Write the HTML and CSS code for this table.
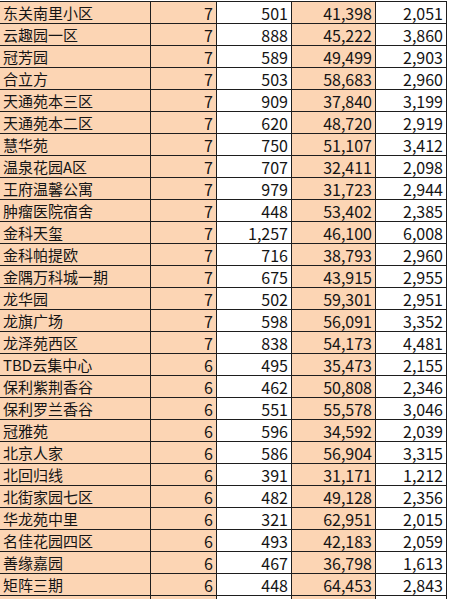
FILE: index.html
```html
<!DOCTYPE html>
<html lang="zh-CN">
<head>
<meta charset="utf-8">
<title>小区数据</title>
<link rel="stylesheet" href="styles.css">
</head>
<body>
<div class="sheet">
<div class="c name">东关南里小区</div><div class="c num o">7</div><div class="c num">501</div><div class="c num o">41,398</div><div class="c num">2,051</div>
<div class="c name">云趣园一区</div><div class="c num o">7</div><div class="c num">888</div><div class="c num o">45,222</div><div class="c num">3,860</div>
<div class="c name">冠芳园</div><div class="c num o">7</div><div class="c num">589</div><div class="c num o">49,499</div><div class="c num">2,903</div>
<div class="c name">合立方</div><div class="c num o">7</div><div class="c num">503</div><div class="c num o">58,683</div><div class="c num">2,960</div>
<div class="c name">天通苑本三区</div><div class="c num o">7</div><div class="c num">909</div><div class="c num o">37,840</div><div class="c num">3,199</div>
<div class="c name">天通苑本二区</div><div class="c num o">7</div><div class="c num">620</div><div class="c num o">48,720</div><div class="c num">2,919</div>
<div class="c name">慧华苑</div><div class="c num o">7</div><div class="c num">750</div><div class="c num o">51,107</div><div class="c num">3,412</div>
<div class="c name">温泉花园A区</div><div class="c num o">7</div><div class="c num">707</div><div class="c num o">32,411</div><div class="c num">2,098</div>
<div class="c name">王府温馨公寓</div><div class="c num o">7</div><div class="c num">979</div><div class="c num o">31,723</div><div class="c num">2,944</div>
<div class="c name">肿瘤医院宿舍</div><div class="c num o">7</div><div class="c num">448</div><div class="c num o">53,402</div><div class="c num">2,385</div>
<div class="c name">金科天玺</div><div class="c num o">7</div><div class="c num">1,257</div><div class="c num o">46,100</div><div class="c num">6,008</div>
<div class="c name">金科帕提欧</div><div class="c num o">7</div><div class="c num">716</div><div class="c num o">38,793</div><div class="c num">2,960</div>
<div class="c name">金隅万科城一期</div><div class="c num o">7</div><div class="c num">675</div><div class="c num o">43,915</div><div class="c num">2,955</div>
<div class="c name">龙华园</div><div class="c num o">7</div><div class="c num">502</div><div class="c num o">59,301</div><div class="c num">2,951</div>
<div class="c name">龙旗广场</div><div class="c num o">7</div><div class="c num">598</div><div class="c num o">56,091</div><div class="c num">3,352</div>
<div class="c name">龙泽苑西区</div><div class="c num o">7</div><div class="c num">838</div><div class="c num o">54,173</div><div class="c num">4,481</div>
<div class="c name">TBD云集中心</div><div class="c num o">6</div><div class="c num">495</div><div class="c num o">35,473</div><div class="c num">2,155</div>
<div class="c name">保利紫荆香谷</div><div class="c num o">6</div><div class="c num">462</div><div class="c num o">50,808</div><div class="c num">2,346</div>
<div class="c name">保利罗兰香谷</div><div class="c num o">6</div><div class="c num">551</div><div class="c num o">55,578</div><div class="c num">3,046</div>
<div class="c name">冠雅苑</div><div class="c num o">6</div><div class="c num">596</div><div class="c num o">34,592</div><div class="c num">2,039</div>
<div class="c name">北京人家</div><div class="c num o">6</div><div class="c num">586</div><div class="c num o">56,904</div><div class="c num">3,315</div>
<div class="c name">北回归线</div><div class="c num o">6</div><div class="c num">391</div><div class="c num o">31,171</div><div class="c num">1,212</div>
<div class="c name">北街家园七区</div><div class="c num o">6</div><div class="c num">482</div><div class="c num o">49,128</div><div class="c num">2,356</div>
<div class="c name">华龙苑中里</div><div class="c num o">6</div><div class="c num">321</div><div class="c num o">62,951</div><div class="c num">2,015</div>
<div class="c name">名佳花园四区</div><div class="c num o">6</div><div class="c num">493</div><div class="c num o">42,183</div><div class="c num">2,059</div>
<div class="c name">善缘嘉园</div><div class="c num o">6</div><div class="c num">467</div><div class="c num o">36,798</div><div class="c num">1,613</div>
<div class="c name">矩阵三期</div><div class="c num o">6</div><div class="c num">448</div><div class="c num o">64,453</div><div class="c num">2,843</div>
<div class="c name"></div><div class="c num o"></div><div class="c num"></div><div class="c num o"></div><div class="c num"></div>
</div>
</body>
</html>
```

FILE: styles.css
```css
html, body {
  margin: 0;
  padding: 0;
  background: #ffffff;
}

body {
  font-family: "Noto Sans CJK SC", "Noto Sans", sans-serif;
  font-size: 15px;
  color: #141414;
  overflow: hidden;
}

.sheet {
  display: grid;
  grid-template-columns: 150px 65px 74px 83px 70px;
  grid-auto-rows: 21px;
  gap: 1px;
  width: max-content;
  margin-top: 1px;
  padding: 1px 1px 1px 0;
  background: #1e1e1e;
}

.c {
  box-sizing: border-box;
  height: 21px;
  line-height: 20px;
  padding-top: 1px;
  white-space: nowrap;
  background: #ffffff;
}

.name {
  background: #fcd5b4;
  padding-left: 3px;
}

.num {
  font-size: 16px;
  text-align: right;
  padding-right: 3px;
}

.o {
  background: #fcd5b4;
}
```
